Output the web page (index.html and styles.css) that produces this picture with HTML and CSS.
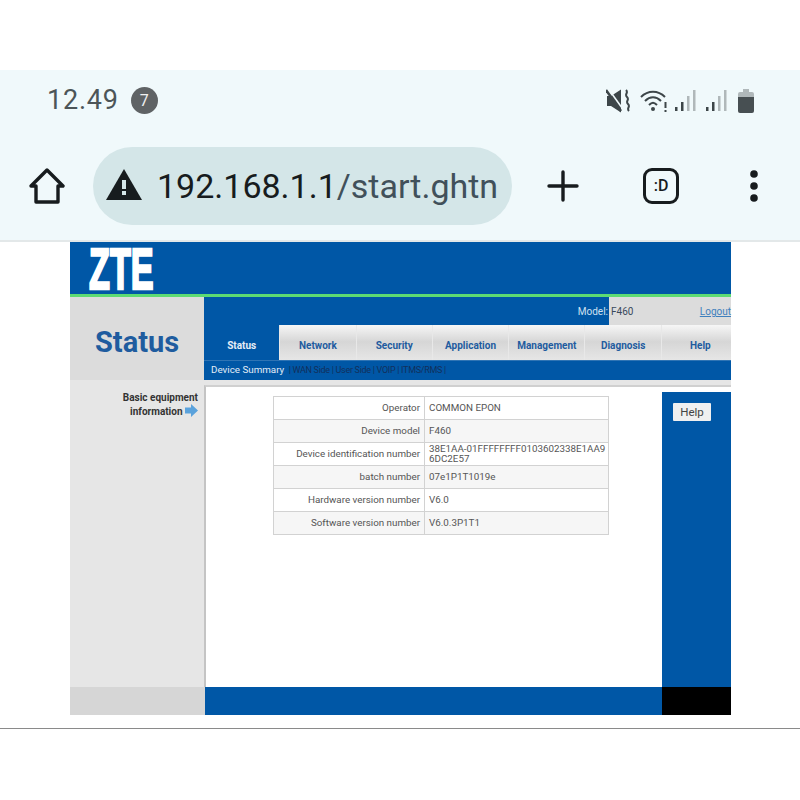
FILE: index.html
```html
<!DOCTYPE html>
<html lang="en">
<head>
    <meta charset="UTF-8">
    <title>192.168.1.1/start.ghtml</title>
    <link rel="stylesheet" href="styles.css">
</head>
<body>
    <header class="phone-bar">
        <div class="status-row">
            <span class="clock">12.49</span>
            <span class="notif-count">7</span>
            <div class="status-icons">
                <svg class="icon-mute" width="24" height="24" viewBox="0 0 24 24">
                    <path d="M1 7h4l10-6.500v23L5 17H1z" fill="#3d4649"/>
                    <path d="M0 1l15 21" stroke="#3d4649" stroke-width="2.500"/>
                    <path d="M2.500 0l15 21" stroke="#f0f9fb" stroke-width="1.600"/>
                    <path d="M20 1c3 3-2 4 1 7s-2 4 1 7-2 4 1 7" fill="none" stroke="#3d4649" stroke-width="2"/>
                </svg>
                <svg class="icon-wifi" width="28" height="24" viewBox="0 0 28 24">
                    <path d="M1 8c7-7 17-7 24 0M5 12c5-5 11-5 16 0M9 16c3-3 5-3 8 0" fill="none" stroke="#3d4649" stroke-width="2"/>
                    <circle cx="13" cy="20" r="2" fill="#3d4649"/>
                    <path d="M25.500 13v6M25.500 21v2" stroke="#3d4649" stroke-width="2"/>
                </svg>
                <svg class="icon-signal" width="22" height="23" viewBox="0 0 22 23">
                    <rect x="1" y="18" width="2.500" height="4" fill="#3d4649"/>
                    <rect x="7" y="13" width="2.500" height="9" fill="#3d4649"/>
                    <rect x="13" y="7" width="2.500" height="15" fill="#b0b8ba"/>
                    <rect x="19" y="1" width="2.500" height="21" fill="#b0b8ba"/>
                </svg>
                <svg class="icon-signal" width="22" height="23" viewBox="0 0 22 23">
                    <rect x="1" y="18" width="2.500" height="4" fill="#3d4649"/>
                    <rect x="7" y="13" width="2.500" height="9" fill="#3d4649"/>
                    <rect x="13" y="7" width="2.500" height="15" fill="#b0b8ba"/>
                    <rect x="19" y="1" width="2.500" height="21" fill="#b0b8ba"/>
                </svg>
                <svg class="icon-battery" width="16" height="24" viewBox="0 0 16 24">
                    <path d="M5 0h6v3h3a2 2 0 0 1 2 2v4H0V5a2 2 0 0 1 2-2h3z" fill="#b0b8ba"/>
                    <path d="M0 8h16v14a2 2 0 0 1-2 2H2a2 2 0 0 1-2-2z" fill="#474f52"/>
                </svg>
            </div>
        </div>
        <div class="tool-row">
            <svg class="icon-home" width="36" height="38" viewBox="0 0 36 38">
                <path d="M2 19L18 3l16 16h-5v16H7V19z" fill="none" stroke="#171c1e" stroke-width="3.400" stroke-linejoin="round"/>
            </svg>
            <div class="url-pill">
                <svg class="icon-warn" width="36" height="31" viewBox="0 0 36 31">
                    <path d="M18 0l18 31H0z" fill="#171c1e"/>
                    <rect x="16" y="11" width="4" height="9" fill="#d4e6e8"/>
                    <rect x="16" y="22" width="4" height="4" fill="#d4e6e8"/>
                </svg>
                <div class="url-text"><span class="url-host">192.168.1.1</span>/start.ghtn</div>
            </div>
            <svg class="icon-plus" width="32" height="32" viewBox="0 0 32 32">
                <path d="M16 2v28M2 16h28" stroke="#171c1e" stroke-width="3.400" stroke-linecap="round"/>
            </svg>
            <div class="tab-count">:D</div>
            <svg class="icon-dots" width="10" height="32" viewBox="0 0 10 32">
                <circle cx="5" cy="4" r="3.800" fill="#171c1e"/>
                <circle cx="5" cy="16" r="3.800" fill="#171c1e"/>
                <circle cx="5" cy="28" r="3.800" fill="#171c1e"/>
            </svg>
        </div>
    </header>

    <div class="router-page">
        <div class="zte-header">
            <span class="zte-logo">ZTE</span>
        </div>

        <div class="zte-top">
            <div class="page-title">Status</div>
            <div class="top-right">
                <div class="model-bar">
                    <div class="model-name">Model:</div>
                    <div class="model-value">
                        <span>F460</span>
                        <a href="#" class="logout">Logout</a>
                    </div>
                </div>
                <nav class="tabs">
                    <a href="#" class="tab active">Status</a>
                    <a href="#" class="tab">Network</a>
                    <a href="#" class="tab">Security</a>
                    <a href="#" class="tab">Application</a>
                    <a href="#" class="tab">Management</a>
                    <a href="#" class="tab">Diagnosis</a>
                    <a href="#" class="tab">Help</a>
                </nav>
                <div class="sub-tabs">
                    <span class="sub-active">Device Summary</span>
                    <span class="sub-rest">| WAN Side | User Side | VOIP | ITMS/RMS |</span>
                </div>
            </div>
        </div>

        <div class="zte-main">
            <aside class="side-menu">
                <div>Basic equipment</div>
                <div class="side-line">information
                    <svg width="13" height="13" viewBox="0 0 13 13">
                        <path d="M0 3.500h6V0l7 6.500L6 13V9.500H0z" fill="#5aa2dc"/>
                    </svg>
                </div>
            </aside>
            <div class="content">
                <div class="content-inner">
                    <table class="info-table">
                        <tr><td class="label">Operator</td><td class="value">COMMON EPON</td></tr>
                        <tr><td class="label">Device model</td><td class="value">F460</td></tr>
                        <tr><td class="label">Device identification number</td><td class="value">38E1AA-01FFFFFFFF0103602338E1AA9<br>6DC2E57</td></tr>
                        <tr><td class="label">batch number</td><td class="value">07e1P1T1019e</td></tr>
                        <tr><td class="label">Hardware version number</td><td class="value">V6.0</td></tr>
                        <tr><td class="label">Software version number</td><td class="value">V6.0.3P1T1</td></tr>
                    </table>
                </div>
                <div class="help-panel">
                    <button class="help-btn">Help</button>
                </div>
            </div>
        </div>

        <div class="zte-footer">
            <div class="foot-left"></div>
            <div class="foot-mid"></div>
            <div class="foot-right"></div>
        </div>
    </div>

    <div class="bottom-line"></div>
</body>
</html>
```

FILE: styles.css
```css
* {
    margin: 0;
    padding: 0;
    box-sizing: border-box;
}

body {
    font-family: Roboto, sans-serif;
    background: #fff;
    padding-top: 70px;
}

/* phone status bar + browser toolbar */
.phone-bar {
    height: 172px;
    background: #f0f9fb;
    border-bottom: 2px solid #e3e8e9;
}

.status-row {
    height: 75px;
    padding: 14px 46px 0 47px;
    display: flex;
    align-items: flex-start;
}

.clock {
    font-size: 27px;
    line-height: 32px;
    color: #4c5558;
    letter-spacing: 0.8px;
}

.notif-count {
    width: 27px;
    height: 27px;
    margin: 3px 0 0 12px;
    border-radius: 50%;
    background: #5f6365;
    color: #f0f0f0;
    font-size: 16px;
    line-height: 27px;
    text-align: center;
}

.status-icons {
    margin-left: auto;
    margin-top: 5px;
    display: flex;
    align-items: flex-start;
}

.icon-wifi {
    margin-left: 10px;
}

.icon-signal {
    margin-left: 9px;
}

.icon-wifi + .icon-signal {
    margin-left: 6px;
}

.icon-battery {
    margin-left: 11px;
}

.tool-row {
    height: 78px;
    margin-top: 2px;
    padding-left: 29px;
    display: flex;
    align-items: center;
}

.url-pill {
    width: 419px;
    height: 78px;
    margin-left: 28px;
    padding: 0 13px;
    border-radius: 39px;
    background: #d4e6e8;
    display: flex;
    align-items: center;
}

.icon-warn {
    flex-shrink: 0;
    margin-top: -4px;
}

.url-text {
    margin-left: 15px;
    font-size: 34px;
    color: #41505a;
    white-space: nowrap;
}

.url-host {
    color: #171c1e;
}

.icon-plus {
    margin-left: 35px;
}

.tab-count {
    width: 36px;
    height: 36px;
    margin-left: 64px;
    border: 3.5px solid #171c1e;
    border-radius: 9px;
    color: #171c1e;
    font-size: 16px;
    font-weight: 500;
    line-height: 29px;
    text-align: center;
}

.icon-dots {
    margin-left: 70px;
}

/* router admin page */
.router-page {
    width: 661px;
    height: 473px;
    margin-left: 70px;
    background: #e6e6e6;
    display: flex;
    flex-direction: column;
}

.zte-header {
    height: 52px;
    background: #0057a6;
}

.zte-logo {
    display: block;
    width: 64px;
    margin-left: 19px;
    padding-top: 3px;
    font-family: "Liberation Sans", sans-serif;
    font-size: 58px;
    font-weight: 700;
    line-height: 48px;
    color: #fff;
    transform: scaleX(0.59);
    transform-origin: left top;
    -webkit-text-stroke: 2.5px #fff;
}

.zte-top {
    height: 86px;
    border-top: 3px solid #5ddb73;
    background: #dcdcdc;
    display: flex;
}

.page-title {
    width: 134px;
    padding: 26px 0 0 25px;
    font-size: 29px;
    font-weight: 700;
    line-height: 38px;
    color: #1f5c9f;
}

.top-right {
    flex: 1;
    display: flex;
    flex-direction: column;
}

.model-bar {
    height: 28px;
    display: flex;
    font-size: 10px;
    line-height: 29px;
}

.model-name {
    width: 405px;
    padding-right: 1px;
    background: #0057a6;
    color: #cfe0f0;
    text-align: right;
}

.model-value {
    flex: 1;
    padding-left: 2px;
    color: #3a4a5c;
    display: flex;
    justify-content: space-between;
}

.logout {
    color: #3f7fbd;
}

.tabs {
    height: 35px;
    display: grid;
    grid-template-columns: repeat(6, 76.300px) 1fr;
}

.tab {
    border-right: 1px solid #e8e8e8;
    background: linear-gradient(#f6f6f6, #d6d6d6 40%, #ececec);
    color: #1f5c9f;
    font-size: 10px;
    font-weight: 700;
    line-height: 42px;
    text-align: center;
    text-decoration: none;
}

.tab:last-child {
    padding-left: 8px;
    border-right: 0;
}

.tab.active {
    background: #0057a6;
    color: #e6eef6;
}

.sub-tabs {
    height: 20px;
    padding-left: 7px;
    background: #0057a6;
    border-top: 1px solid #2f74b4;
    font-size: 9.800px;
    line-height: 17px;
    white-space: nowrap;
}

.sub-active {
    color: #e3edf6;
}

.sub-rest {
    margin-left: 2px;
    font-size: 9px;
    letter-spacing: -0.3px;
    color: #12305c;
}

.zte-main {
    flex: 1;
    display: flex;
}

.side-menu {
    width: 134px;
    padding: 11px 6px 0 0;
    font-size: 10px;
    font-weight: 700;
    line-height: 13px;
    color: #333;
    text-align: right;
}

.side-line svg {
    vertical-align: -2px;
}

.content {
    flex: 1;
    margin-top: 5px;
    background: #fff;
    border-top: 2px solid #d0d0d0;
    border-left: 2px solid #c4c4c4;
    display: flex;
}

.content-inner {
    width: 456px;
    padding: 9px 0 0 67px;
}

.info-table {
    width: 336px;
    border-collapse: collapse;
    table-layout: fixed;
    font-size: 9.800px;
    color: #555;
}

.info-table td {
    height: 23px;
    padding-bottom: 1px;
    border: 1px solid #d2d2d2;
    line-height: 10px;
}

.info-table tr:nth-child(even) {
    background: #f6f6f6;
}

.label {
    width: 151px;
    padding-right: 4px;
    text-align: right;
}

.value {
    padding-left: 4px;
    white-space: nowrap;
}

.help-panel {
    flex: 1;
    margin-top: 5px;
    padding: 11px 0 0 11px;
    background: #0057a6;
}

.help-btn {
    display: block;
    width: 38px;
    height: 18px;
    border: 0;
    border-radius: 1px;
    background: #f0f0f0;
    color: #444;
    font-family: inherit;
    font-size: 11.500px;
}

.zte-footer {
    height: 28px;
    display: flex;
}

.foot-left {
    width: 135px;
    background: #d6d6d6;
}

.foot-mid {
    width: 457px;
    background: #0057a6;
}

.foot-right {
    flex: 1;
    background: #000;
}

.bottom-line {
    height: 1px;
    margin-top: 13px;
    background: #8a8a8a;
}
```
